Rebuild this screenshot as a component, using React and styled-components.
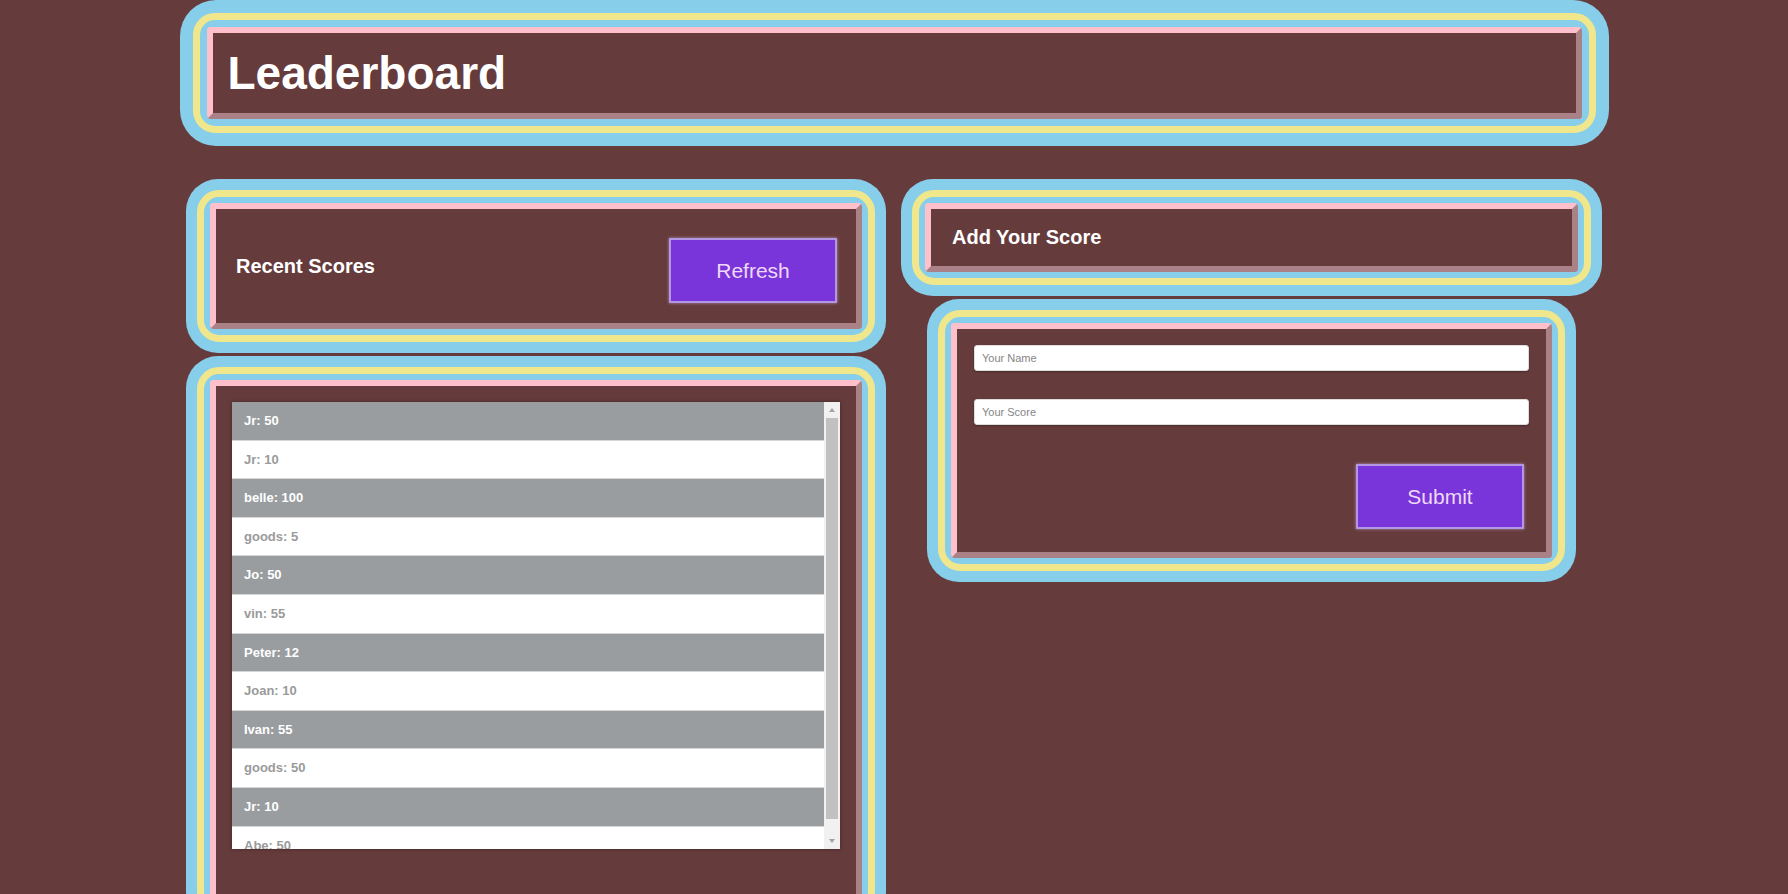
import React from "react";
import styled, { createGlobalStyle } from "styled-components";

const GlobalStyle = createGlobalStyle`
  body {
    margin: 0;
    background: #663b3c;
    font-family: "Liberation Sans", Arial, sans-serif;
  }
`;

const Page = styled.div`
  width: 100%;
`;

const Card = styled.div`
  background: #87ceeb;
  border-radius: ${(p) => p.$radius || 32}px;
  padding: ${(p) => p.$pad || 11}px;
  margin: ${(p) => p.$margin || "0"};
`;

const Ring = styled.div`
  border: 7px solid #f0e68c;
  border-radius: 22px;
  padding: ${(p) => p.$pad || 6}px;
`;

const Panel = styled.div`
  border: 6px outset pink;
  border-radius: 4px;
  background: #663b3c;
  height: ${(p) => p.$h}px;
  display: flex;
  flex-direction: ${(p) => p.$dir || "row"};
  align-items: ${(p) => p.$align || "center"};
  justify-content: space-between;
  padding: ${(p) => p.$padding || "0"};
`;

const HeaderWrap = styled.header`
  width: 1429px;
  margin: 0 auto;
`;

const Title = styled.h1`
  margin: 0;
  font-size: 46px;
  font-weight: bold;
  color: #fff;
`;

const Grid = styled.div`
  width: 1416px;
  margin: 33px auto 0;
  display: grid;
  grid-template-columns: 700px 701px;
  column-gap: 15px;
`;

const Column = styled.div`
  display: flex;
  flex-direction: column;
  gap: 3px;
`;

const SubTitle = styled.h2`
  margin: 0;
  font-size: 20px;
  font-weight: bold;
  color: #fff;
`;

const Button = styled.button`
  width: 168px;
  height: 65px;
  margin-top: ${(p) => p.$mt || 0}px;
  background: #7935d9;
  border: 2px solid #b497e4;
  box-shadow: 0 0 3px rgba(220, 200, 255, 0.6);
  color: #efd9f7;
  font-family: "Liberation Sans", Arial, sans-serif;
  font-size: 21px;
  cursor: pointer;
`;

const ListBox = styled.div`
  display: flex;
  height: 447px;
  background: #fff;
  box-shadow: 0 0 4px rgba(0, 0, 0, 0.35);
`;

const ScrollList = styled.ul`
  flex: 1;
  list-style: none;
  margin: 0;
  padding: 0;
  overflow: hidden;
`;

const ScrollBar = styled.div`
  width: 16px;
  display: flex;
  flex-direction: column;
  background: #f1f1f1;
`;

const Arrow = styled.div`
  height: 16px;
  display: flex;
  align-items: center;
  justify-content: center;
  &::after {
    content: "";
    border-left: 3.5px solid transparent;
    border-right: 3.5px solid transparent;
    ${(p) => (p.$down ? "border-top" : "border-bottom")}: 4px solid #a3a3a3;
  }
`;

const Thumb = styled.div`
  flex: 1;
  margin: 0 2px 14px;
  background: #c1c1c1;
`;

const Row = styled.li`
  padding: 11px 12px;
  font-size: 13px;
  line-height: 15.6px;
  font-weight: bold;
  background: ${(p) => (p.$dark ? "#9a9d9f" : "#fff")};
  color: ${(p) => (p.$dark ? "#fff" : "#9a9a9a")};
  border-bottom: 1px solid #d6d6d6;
`;

const Form = styled.form`
  width: 100%;
`;

const Input = styled.input`
  display: block;
  width: 100%;
  height: 26px;
  box-sizing: border-box;
  margin: 0 0 ${(p) => p.$mb || 0}px;
  padding: 0 7px;
  border: 1px solid #ddd;
  border-radius: 3px;
  background: #fff;
  box-shadow: 0 1px 2px rgba(0, 0, 0, 0.3);
  font-family: "Liberation Sans", Arial, sans-serif;
  font-size: 11px;
  &::placeholder {
    color: #858585;
  }
`;

const SubmitRow = styled.div`
  display: flex;
  justify-content: flex-end;
  margin-top: 39px;
  padding-right: 5px;
`;

const scores = [
  { name: "Jr", score: 50 },
  { name: "Jr", score: 10 },
  { name: "belle", score: 100 },
  { name: "goods", score: 5 },
  { name: "Jo", score: 50 },
  { name: "vin", score: 55 },
  { name: "Peter", score: 12 },
  { name: "Joan", score: 10 },
  { name: "Ivan", score: 55 },
  { name: "goods", score: 50 },
  { name: "Jr", score: 10 },
  { name: "Abe", score: 50 },
];

const App = () => {
  return (
    <Page>
      <GlobalStyle />
      <HeaderWrap>
        <Card $pad={13} $radius={36}>
          <Ring $pad={7}>
            <Panel $h={80} $padding="0 15px">
              <Title>Leaderboard</Title>
            </Panel>
          </Ring>
        </Card>
      </HeaderWrap>

      <Grid>
        <Column>
          <Card>
            <Ring>
              <Panel $h={114} $padding="0 19px 0 20px">
                <SubTitle>Recent Scores</SubTitle>
                <Button $mt={9}>Refresh</Button>
              </Panel>
            </Ring>
          </Card>
          <Card>
            <Ring>
              <Panel $h={478} $dir="column" $align="stretch" $padding="16px 16px 15px 16px">
                <ListBox>
                  <ScrollList>
                    {scores.map((s, i) => (
                      <Row key={i} $dark={i % 2 === 0}>
                        {s.name}: {s.score}
                      </Row>
                    ))}
                  </ScrollList>
                  <ScrollBar>
                    <Arrow />
                    <Thumb />
                    <Arrow $down />
                  </ScrollBar>
                </ListBox>
              </Panel>
            </Ring>
          </Card>
        </Column>

        <Column>
          <Card>
            <Ring>
              <Panel $h={57} $padding="0 21px">
                <SubTitle>Add Your Score</SubTitle>
              </Panel>
            </Ring>
          </Card>
          <Card $margin="0 26px">
            <Ring>
              <Panel $h={207} $dir="column" $align="stretch" $padding="16px 17px 0 17px">
                <Form onSubmit={(e) => e.preventDefault()}>
                  <Input placeholder="Your Name" $mb={28} />
                  <Input placeholder="Your Score" />
                  <SubmitRow>
                    <Button type="submit">Submit</Button>
                  </SubmitRow>
                </Form>
              </Panel>
            </Ring>
          </Card>
        </Column>
      </Grid>
    </Page>
  );
};

export default App;
